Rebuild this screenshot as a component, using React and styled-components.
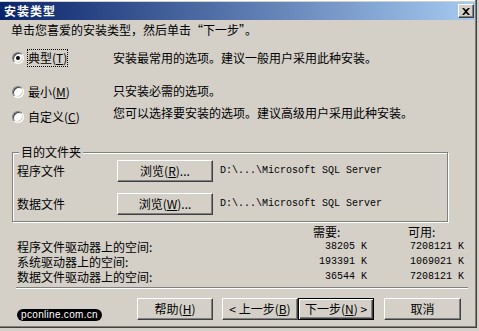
import styled, { createGlobalStyle } from 'styled-components';

const GlobalStyle = createGlobalStyle`
  html, body {
    margin: 0;
    padding: 0;
    background: #d4d0c8;
  }
  body {
    font-family: 'Noto Sans CJK SC', 'Noto Sans', sans-serif;
    font-size: 12px;
    line-height: 14px;
    color: #000;
  }
`;

const options = [
  { id: 'typical', label: '典型', key: 'T', desc: '安装最常用的选项。建议一般用户采用此种安装。', checked: true, space: 12, offset: 2 },
  { id: 'minimal', label: '最小', key: 'M', desc: '只安装必需的选项。', space: 16, offset: 1 },
  { id: 'custom', label: '自定义', key: 'C', desc: '您可以选择要安装的选项。建议高级用户采用此种安装。', space: 7, offset: -2 },
];

const folders = [
  { id: 'program', label: '程序文件', key: 'R', path: 'D:\\...\\Microsoft SQL Server' },
  { id: 'data', label: '数据文件', key: 'W', path: 'D:\\...\\Microsoft SQL Server' },
];

const drives = [
  { id: 'program', label: '程序文件驱动器上的空间:', need: '38205 K', free: '7208121 K' },
  { id: 'system', label: '系统驱动器上的空间:', need: '193391 K', free: '1069021 K' },
  { id: 'data', label: '数据文件驱动器上的空间:', need: '36544 K', free: '7208121 K' },
];

const App = () => {
  return (
    <>
      <GlobalStyle />
      <Window>
        <TitleBar>
          <Title>安装类型</Title>
          <CloseButton aria-label='关闭'>
            <svg width='8' height='7' viewBox='0 0 8 7'>
              <path d='M0 0h2l2 2 2-2h2L5 3.5 8 7H6L4 5 2 7H0l3-3.5z' fill='#000' />
            </svg>
          </CloseButton>
        </TitleBar>
        <Content>
          <Intro>单击您喜爱的安装类型，然后单击“下一步”。</Intro>
          {options.map((o) => (
            <OptionRow key={o.id} $space={o.space}>
              <Choice>
                <Radio $checked={o.checked} />
                <ChoiceLabel $focused={o.checked}>
                  {o.label}(<u>{o.key}</u>)
                </ChoiceLabel>
              </Choice>
              <Description $offset={o.offset}>{o.desc}</Description>
            </OptionRow>
          ))}
          <Group>
            <Legend>目的文件夹</Legend>
            {folders.map((f, i) => (
              <FolderRow key={f.id} $first={i === 0}>
                <FolderLabel>{f.label}</FolderLabel>
                <Button $width={96}>
                  浏览(<u>{f.key}</u>)...
                </Button>
                <Path>{f.path}</Path>
              </FolderRow>
            ))}
          </Group>
          <SpaceGrid>
            <span />
            <Head>需要:</Head>
            <Head>可用:</Head>
            {drives.map((d) => (
              <DriveRow key={d.id}>
                <DriveLabel>{d.label}</DriveLabel>
                <Amount>{d.need}</Amount>
                <Amount>{d.free}</Amount>
              </DriveRow>
            ))}
          </SpaceGrid>
          <Separator />
          <ButtonRow>
            <Watermark>pconline.com.cn</Watermark>
            <Buttons>
              <Button>
                帮助(<u>H</u>)
              </Button>
              <Pair>
                <Button>
                  &lt; 上一步(<u>B</u>)
                </Button>
                <Button $default>
                  下一步(<u>N</u>) &gt;
                </Button>
              </Pair>
              <Button $width={77}>取消</Button>
            </Buttons>
          </ButtonRow>
        </Content>
      </Window>
    </>
  );
};

const Window = styled.div`
  box-sizing: border-box;
  width: 477px;
  height: 328px;
  padding-top: 2px;
  background: #d4d0c8;
  border-right: 1px solid #404040;
  border-bottom: 1px solid #404040;
  box-shadow: inset -1px -1px 0 #808080, inset 0 1px 0 #ffffff;
  overflow: hidden;
`;

const TitleBar = styled.div`
  display: flex;
  align-items: center;
  justify-content: space-between;
  height: 18px;
  margin-right: 1px;
  padding: 0 1px 0 4px;
  background: linear-gradient(to right, #0a246a, #a6caf0);
`;

const Title = styled.span`
  color: #fff;
  font-weight: 700;
  font-size: 12px;
  letter-spacing: 1px;
`;

const CloseButton = styled.div`
  box-sizing: border-box;
  display: flex;
  align-items: center;
  justify-content: center;
  width: 16px;
  height: 14px;
  background: #d4d0c8;
  border: 1px solid;
  border-color: #ffffff #404040 #404040 #ffffff;
  box-shadow: inset -1px -1px 0 #808080;
`;

const Content = styled.div`
  padding-left: 11px;
`;

const Intro = styled.div`
  margin-top: 3px;
`;

const OptionRow = styled.div`
  display: flex;
  align-items: flex-start;
  height: 18px;
  margin-top: ${(p) => p.$space}px;
  padding-left: 1px;
`;

const Choice = styled.div`
  display: flex;
  align-items: center;
  width: 101px;
  height: 18px;
`;

const Radio = styled.span`
  box-sizing: border-box;
  position: relative;
  width: 12px;
  height: 12px;
  border-radius: 50%;
  background: #fff;
  border: 1px solid;
  border-color: #808080 #ffffff #ffffff #808080;
  box-shadow: inset 1px 1px 0 #404040, inset -1px -1px 0 #d4d0c8;
  &::after {
    content: '';
    display: ${(p) => (p.$checked ? 'block' : 'none')};
    position: absolute;
    left: 3px;
    top: 3px;
    width: 4px;
    height: 4px;
    border-radius: 50%;
    background: #000;
  }
`;

const ChoiceLabel = styled.span`
  margin-left: 3px;
  padding: 1px 0;
  border: 1px ${(p) => (p.$focused ? 'dotted #000' : 'solid transparent')};
`;

const Description = styled.span`
  margin-top: ${(p) => p.$offset}px;
`;

const Group = styled.fieldset`
  box-sizing: border-box;
  width: 436px;
  margin: 19px 0 0 1px;
  padding: 1px 0 6px 4px;
  border: 1px solid #808080;
  box-shadow: 1px 1px 0 #ffffff, inset 1px 1px 0 #ffffff;
`;

const Legend = styled.legend`
  margin-left: 2px;
  padding: 0 2px;
  background: #d4d0c8;
  line-height: 14px;
`;

const FolderRow = styled.div`
  display: flex;
  align-items: center;
  height: 22px;
  margin-top: ${(p) => (p.$first ? 0 : 11)}px;
`;

const FolderLabel = styled.span`
  width: 100px;
`;

const Path = styled.span`
  margin-left: 7px;
  font-family: 'Liberation Mono', monospace;
  font-size: 10px;
`;

const Button = styled.div`
  box-sizing: border-box;
  display: flex;
  align-items: center;
  justify-content: center;
  width: ${(p) => p.$width || 76}px;
  height: 22px;
  background: #d4d0c8;
  border: 1px solid;
  border-color: ${(p) => (p.$default ? '#000' : '#ffffff #404040 #404040 #ffffff')};
  box-shadow: ${(p) =>
    p.$default
      ? 'inset 1px 1px 0 #ffffff, inset -1px -1px 0 #404040, inset -2px -2px 0 #808080'
      : 'inset -1px -1px 0 #808080, inset 1px 1px 0 #d4d0c8'};
  white-space: nowrap;
  u {
    text-decoration-thickness: 1px;
  }
`;

const SpaceGrid = styled.div`
  display: grid;
  grid-template-columns: 255px 54px 56px;
  grid-auto-rows: 15px;
  column-gap: 41px;
  margin-top: 2px;
  padding-left: 6px;
  line-height: 15px;
`;

const DriveRow = styled.div`
  display: contents;
`;

const DriveLabel = styled.span`
  line-height: 15px;
  white-space: nowrap;
`;

const Head = styled.span``;

const Amount = styled.span`
  text-align: right;
  font-family: 'Liberation Mono', monospace;
  font-size: 10px;
`;

const Separator = styled.div`
  width: 452px;
  height: 1px;
  margin: 3px 0 0 5px;
  background: #808080;
  border-bottom: 1px solid #ffffff;
`;

const ButtonRow = styled.div`
  display: flex;
  align-items: flex-start;
  margin-top: 9px;
  padding-left: 6px;
`;

const Watermark = styled.span`
  box-sizing: border-box;
  width: 85px;
  height: 12px;
  margin-top: 11px;
  border-radius: 6px;
  background: #000;
  color: #fff;
  font-family: 'Liberation Sans', Arial, sans-serif;
  font-size: 10px;
  line-height: 12px;
  letter-spacing: 0.3px;
  text-align: center;
  white-space: nowrap;
  overflow: hidden;
`;

const Buttons = styled.div`
  display: flex;
  gap: 9px;
  margin-left: 35px;
`;

const Pair = styled.div`
  display: flex;
  margin-right: 1px;
`;

export default App;
